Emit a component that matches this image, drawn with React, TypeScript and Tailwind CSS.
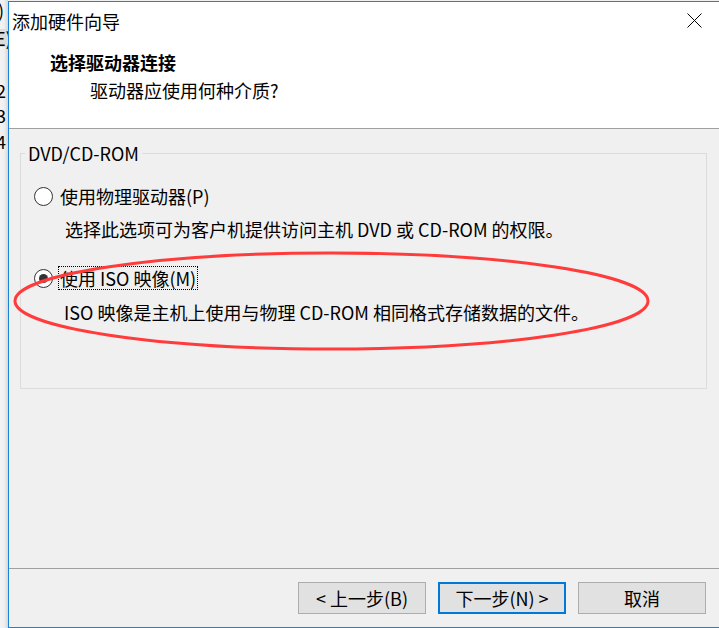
import React from 'react';

const font = { fontFamily: '"Noto Sans CJK SC", "Liberation Sans", sans-serif' };

const Radio: React.FC<{ checked?: boolean }> = ({ checked }) => (
  <div className="w-[19px] h-[19px] rounded-full border border-[#333333] bg-white flex items-center justify-center shrink-0">
    {checked && <div className="w-[9px] h-[9px] rounded-full bg-[#333333]" />}
  </div>
);

const Button: React.FC<{ label: string; focused?: boolean }> = ({ label, focused }) => (
  <button
    className={
      focused
        ? 'w-[128px] h-[32px] bg-[#e1e1e1] border-2 border-[#0078d7] text-[18px] leading-[24px] text-black flex items-center justify-center'
        : 'w-[128px] h-[32px] bg-[#e1e1e1] border border-[#adadad] text-[18px] leading-[24px] text-black flex items-center justify-center'
    }
  >
    {label}
  </button>
);

export default function App() {
  return (
    <div className="relative w-[719px] h-[628px] overflow-hidden flex bg-[#f0f0f0]" style={font}>
      {/* window behind */}
      <div className="w-[8px] h-full overflow-hidden flex flex-col text-[18px] leading-[18px] text-black shrink-0 bg-gradient-to-r from-[#f3f3f3] via-[#f0f0f0] to-[#d8d8d8]">
        <div className="mt-[1px] ml-[-2px]">)</div>
        <div className="mt-[10px] h-[18px] bg-[#dcdcdc] ml-[-5px]">E)</div>
        <div className="mt-[34px] ml-[-4px]">2</div>
        <div className="mt-[7px] ml-[-4px]">3</div>
        <div className="mt-[8px] ml-[-4px]">4</div>
      </div>

      {/* dialog */}
      <div className="flex-1 mt-[1px] h-[627px] border-l border-t border-b border-[#1883d7] flex flex-col">
        <div className="bg-white h-[127px] border-b border-[#a0a0a0] flex flex-col shrink-0">
          <div className="h-[37px] flex items-center justify-between pl-[3px] pr-[17px]">
            <span className="text-[18px] leading-[24px] text-black">添加硬件向导</span>
            <svg width="15" height="15" viewBox="0 0 15 15">
              <path d="M0.5 0.5 L14.5 14.5 M14.5 0.5 L0.5 14.5" stroke="#000" strokeWidth="1" fill="none" />
            </svg>
          </div>
          <div className="pl-[41px] pt-[11px]">
            <div className="text-[18px] leading-[24px] font-bold text-black">选择驱动器连接</div>
            <div className="mt-[4px] pl-[40px] text-[18px] leading-[24px] text-black">驱动器应使用何种介质?</div>
          </div>
        </div>

        <div className="h-[440px] pt-[12px] pl-[11px] pr-[12px] border-b border-[#a0a0a0] shrink-0">
          <fieldset className="border border-[#dcdcdc] pb-[64px]">
            <legend className="ml-[4px] px-[3px] text-[18px] leading-[24px] text-black">DVD/CD-ROM</legend>
            <div className="pl-[13px]">
              <div className="mt-[19px] flex items-center h-[24px]">
                <Radio />
                <span className="ml-[5px] border border-transparent px-[1px] text-[18px] leading-[22px] text-black">使用物理驱动器(P)</span>
              </div>
              <div className="mt-[9px] pl-[31px] text-[18px] leading-[24px] text-black">
                选择此选项可为客户机提供访问主机 DVD 或 CD-ROM 的权限。
              </div>
              <div className="mt-[25px] flex items-center h-[24px]">
                <Radio checked />
                <span className="ml-[5px] border border-dotted border-black px-[1px] text-[18px] leading-[22px] text-black">使用 ISO 映像(M)</span>
              </div>
              <div className="mt-[10px] pl-[30px] text-[18px] leading-[24px] text-black">
                ISO 映像是主机上使用与物理 CD-ROM 相同格式存储数据的文件。
              </div>
            </div>
          </fieldset>
        </div>

        <div className="flex-1 flex justify-end gap-[12px] pt-[13px] pr-[13px]">
          <Button label="< 上一步(B)" />
          <Button label="下一步(N) >" focused />
          <Button label="取消" />
        </div>
      </div>

      {/* red annotation */}
      <svg className="absolute inset-0 pointer-events-none" width="719" height="628">
        <ellipse cx="331.5" cy="301" rx="316.5" ry="48" fill="none" stroke="#ff3b3b" strokeWidth="3" />
      </svg>
    </div>
  );
}
